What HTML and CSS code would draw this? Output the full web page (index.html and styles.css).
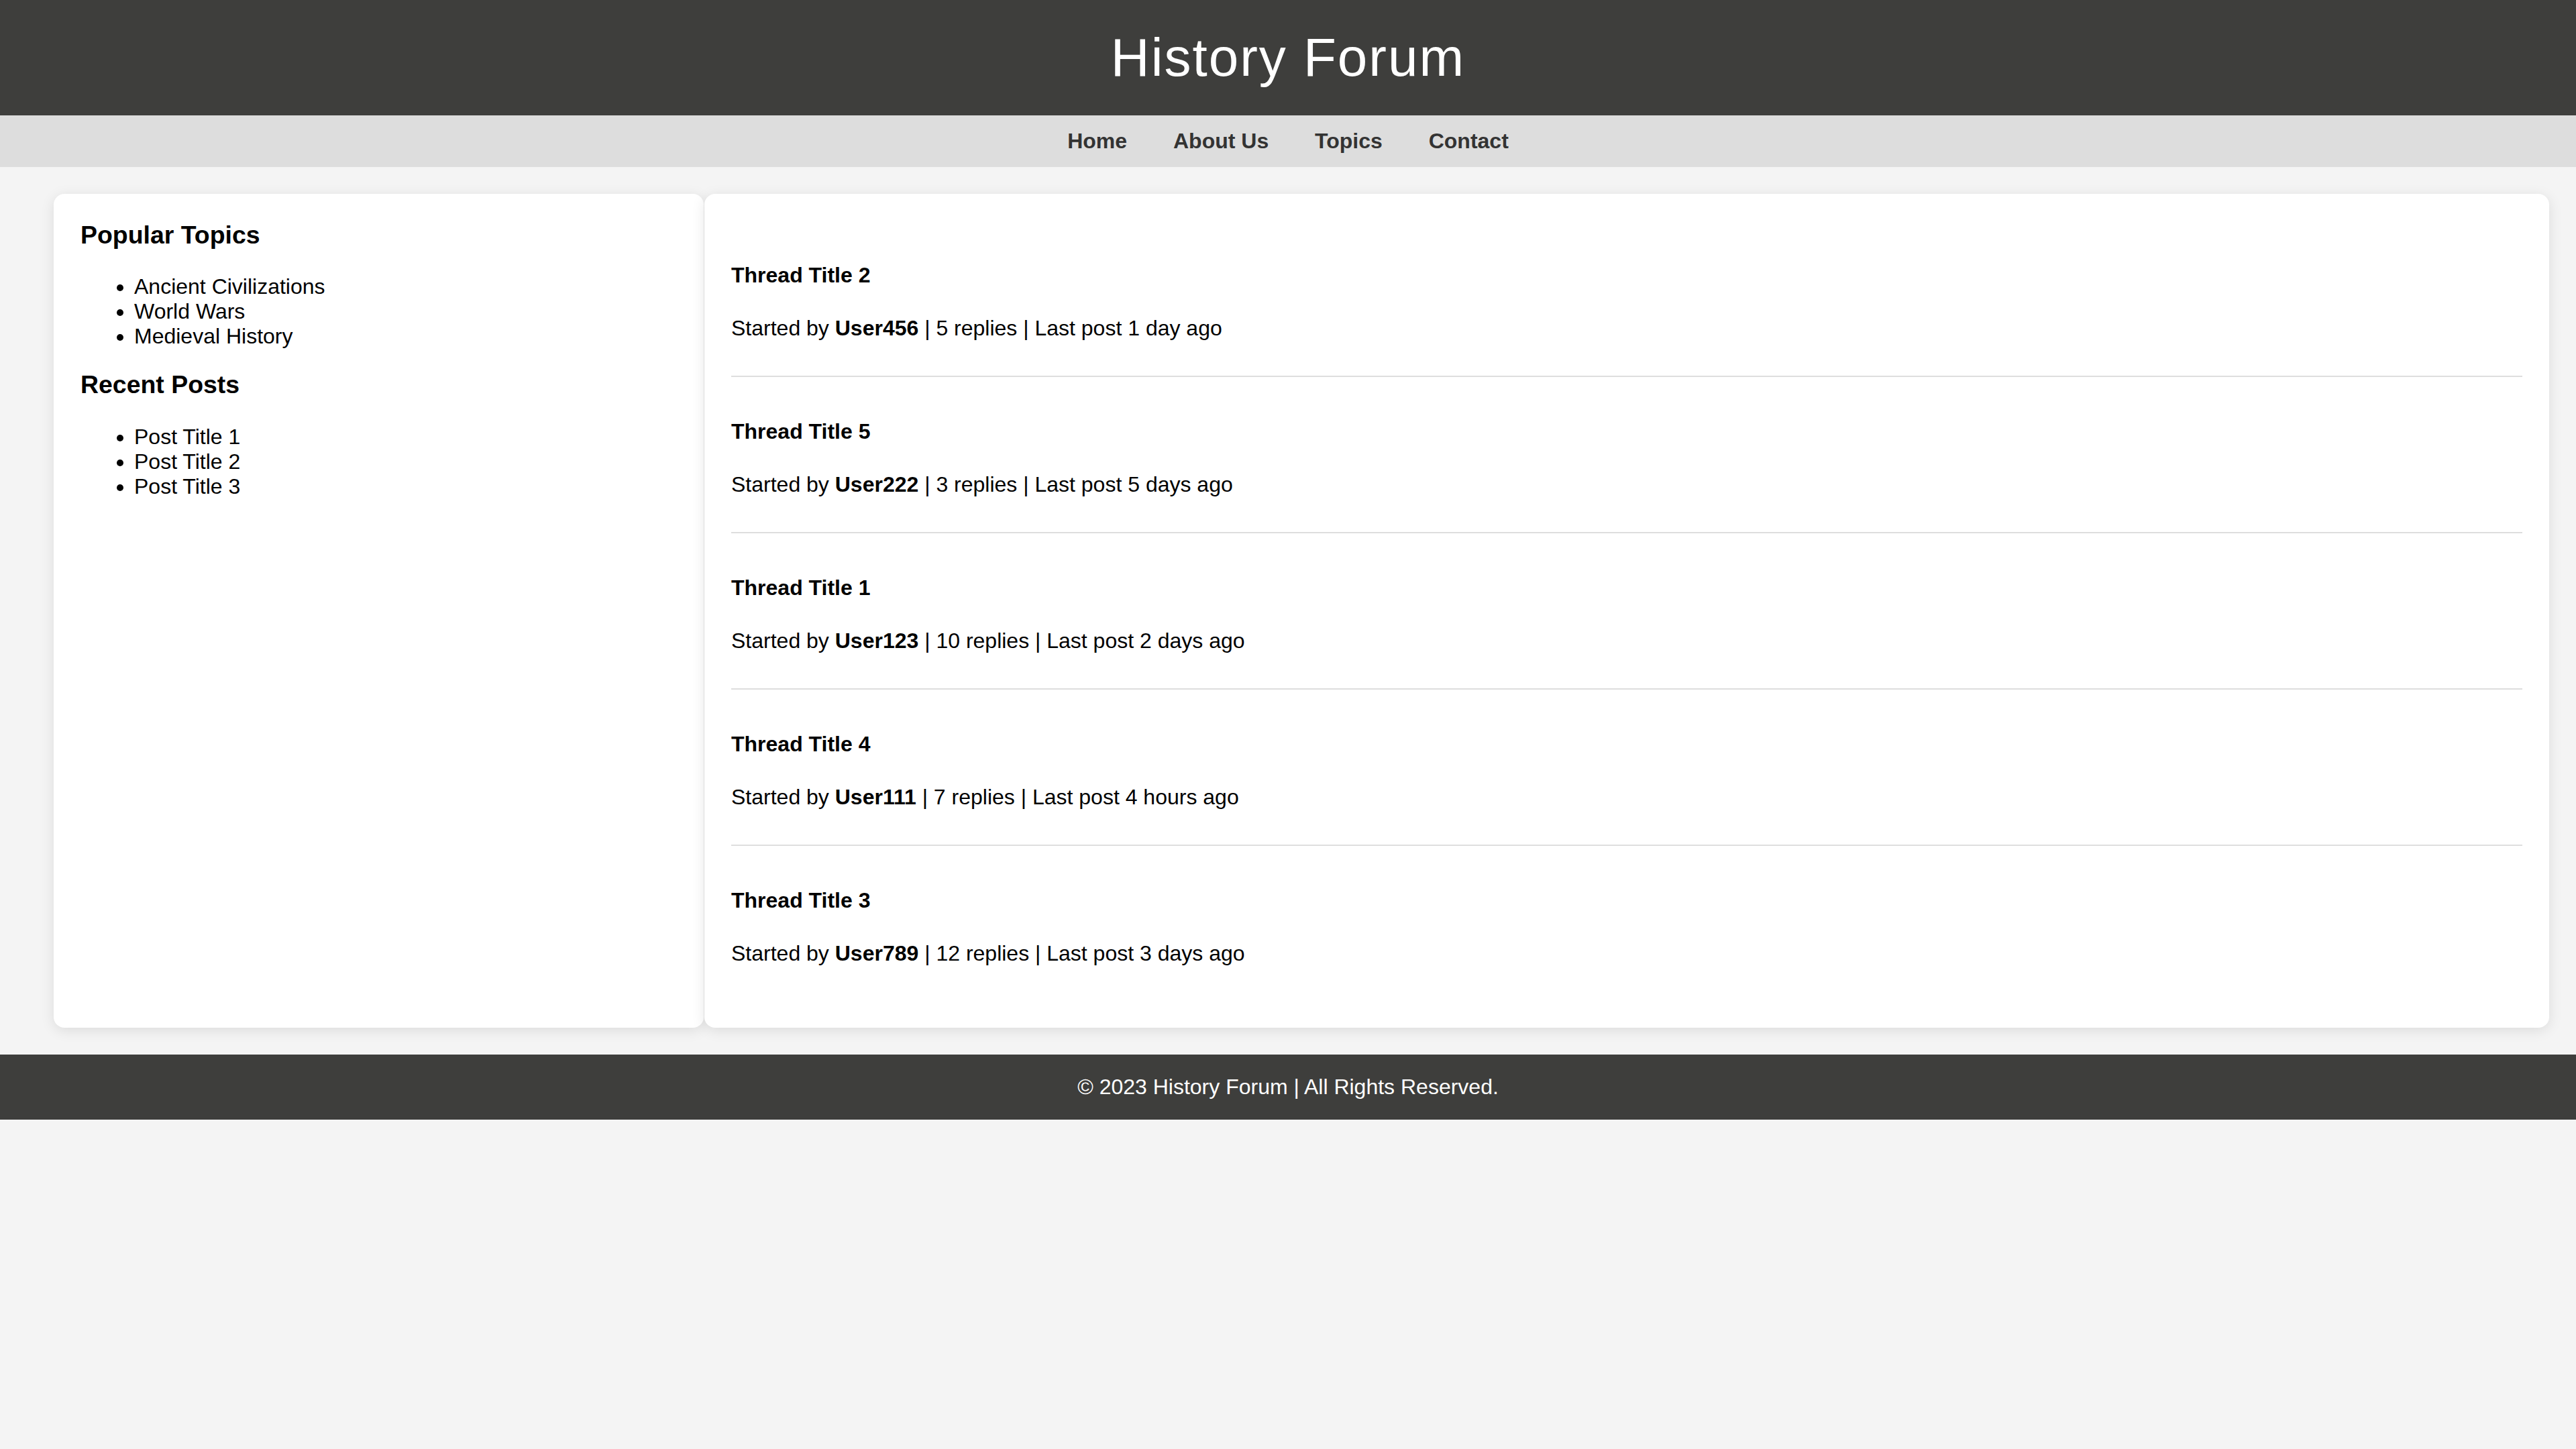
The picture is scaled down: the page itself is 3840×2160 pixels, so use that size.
FILE: index.html
```html
<!DOCTYPE html>
<html lang="en">
<head>
<meta charset="utf-8">
<title>History Forum</title>
<link rel="stylesheet" href="styles.css">
</head>
<body>
<header class="site-header">
  <h1 class="site-title">History Forum</h1>
</header>
<nav class="site-nav">
  <a href="#" class="nav-link">Home</a>
  <a href="#" class="nav-link">About Us</a>
  <a href="#" class="nav-link">Topics</a>
  <a href="#" class="nav-link">Contact</a>
</nav>
<main class="layout">
  <aside class="card sidebar">
    <h3 class="side-heading">Popular Topics</h3>
    <ul class="side-list">
      <li>Ancient Civilizations</li>
      <li>World Wars</li>
      <li>Medieval History</li>
    </ul>
    <h3 class="side-heading">Recent Posts</h3>
    <ul class="side-list">
      <li>Post Title 1</li>
      <li>Post Title 2</li>
      <li>Post Title 3</li>
    </ul>
  </aside>
  <section class="card threads">
    <div class="thread">
      <h4 class="thread-title">Thread Title 2</h4>
      <p class="thread-meta">Started by <strong>User456</strong> | 5 replies | Last post 1 day ago</p>
    </div>
    <div class="thread">
      <h4 class="thread-title">Thread Title 5</h4>
      <p class="thread-meta">Started by <strong>User222</strong> | 3 replies | Last post 5 days ago</p>
    </div>
    <div class="thread">
      <h4 class="thread-title">Thread Title 1</h4>
      <p class="thread-meta">Started by <strong>User123</strong> | 10 replies | Last post 2 days ago</p>
    </div>
    <div class="thread">
      <h4 class="thread-title">Thread Title 4</h4>
      <p class="thread-meta">Started by <strong>User111</strong> | 7 replies | Last post 4 hours ago</p>
    </div>
    <div class="thread">
      <h4 class="thread-title">Thread Title 3</h4>
      <p class="thread-meta">Started by <strong>User789</strong> | 12 replies | Last post 3 days ago</p>
    </div>
  </section>
</main>
<footer class="site-footer">
  <p class="footer-text">&copy; 2023 History Forum | All Rights Reserved.</p>
</footer>
</body>
</html>
```

FILE: styles.css
```css
html, body {
  margin: 0;
  padding: 0;
}

body {
  font-family: "Liberation Sans", Arial, sans-serif;
  font-size: 32px;
  background: #f4f4f4;
  color: #000;
}

.site-header {
  background: #3e3e3c;
  color: #fff;
  text-align: center;
  padding: 40px 0;
}

.site-title {
  margin: 0;
  font-size: 80px;
  font-weight: normal;
  letter-spacing: 2px;
}

.site-nav {
  background: #dddddd;
  text-align: center;
  padding: 20px 0;
}

.nav-link {
  color: #333;
  font-weight: bold;
  text-decoration: none;
  margin: 0 30px;
  font-size: 32px;
}

.layout {
  display: grid;
  grid-template-columns: 969px 1fr;
  column-gap: 1px;
  padding: 40px 40px 40px 80px;
  align-items: stretch;
}

.card {
  background: #fff;
  border-radius: 16px;
  box-shadow: 0 4px 20px rgba(0, 0, 0, 0.1);
  padding: 40px;
}

.side-heading {
  font-size: 37.44px;
  margin: 32px 0 37.44px;
}

.side-heading:first-child {
  margin-top: 0;
}

.side-list {
  margin: 32px 0;
  padding-left: 80px;
}

.thread {
  padding: 20px 0;
  border-bottom: 2px solid #dedede;
}

.thread:last-child {
  border-bottom: none;
}

.thread-title {
  font-size: 32px;
  margin: 42.56px 0;
}

.thread-meta {
  margin: 32px 0;
}

.site-footer {
  background: #3e3e3c;
  color: #fff;
  text-align: center;
  padding: 30px 0;
}

.footer-text {
  margin: 0;
}
```
